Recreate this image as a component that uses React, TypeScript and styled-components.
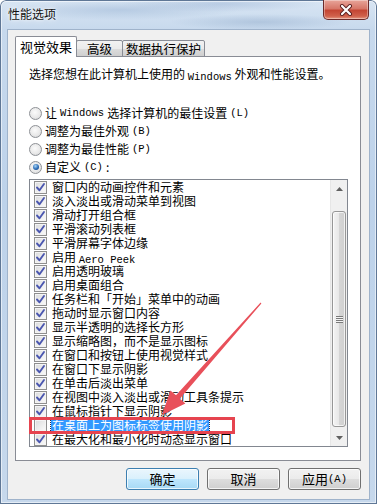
import React from "react";
import styled, { createGlobalStyle } from "styled-components";

const Global = createGlobalStyle`
  html, body { margin: 0; padding: 0; background: #ffffff; }
  body { font-family: "Noto Sans CJK SC", "Noto Sans", sans-serif; font-size: 12px; color: #000; }
  * { box-sizing: border-box; }
`;

const Frame = styled.div`
  position: relative;
  width: 377px;
  height: 504px;
  display: flex;
  flex-direction: column;
  border-radius: 6px 6px 0 0;
  background:
    radial-gradient(ellipse 120px 10px at 120px 10px, rgba(160,185,215,0.55), transparent),
    radial-gradient(ellipse 90px 8px at 260px 22px, rgba(150,175,205,0.5), transparent),
    radial-gradient(ellipse 100px 8px at 220px 4px, rgba(150,175,210,0.45), transparent),
    linear-gradient(180deg, #d8e5f3 0%, #c7d9ed 6%, #bdd2ea 40%, #c6d8ec 100%);
  box-shadow: inset 0 0 0 1px #5f7796, inset 0 0 0 2px rgba(255,255,255,0.55);
  overflow: hidden;
`;

const TitleBar = styled.div`
  height: 29px;
  display: flex;
  align-items: flex-start;
  justify-content: space-between;
  padding: 0 8px 0 8px;
`;

const Title = styled.div`
  font-size: 12px;
  line-height: 14px;
  margin-top: 7px;
  color: #111;
  text-shadow: 0 0 6px rgba(255,255,255,0.95), 0 0 3px rgba(255,255,255,0.9);
`;

const CloseBtn = styled.div`
  width: 46px;
  height: 20px;
  border: 1px solid #6b2a2a;
  border-top: none;
  border-radius: 0 0 5px 5px;
  background: linear-gradient(180deg, #e8a59a 0%, #d77769 45%, #c44634 55%, #d0614c 85%, #e69a84 100%);
  box-shadow: inset 0 0 0 1px rgba(255,255,255,0.35);
  display: flex;
  align-items: center;
  justify-content: center;
`;

const Client = styled.div`
  flex: 1;
  margin: 0 7px 4px 7px;
  background: #f0f0f0;
  border: 1px solid #9fb3cb;
  padding: 6px 8px 9px 7px;
  display: flex;
  flex-direction: column;
`;

const Tabs = styled.div`
  height: 21px;
  display: flex;
  align-items: flex-end;
  margin-bottom: -1px;
  position: relative;
  z-index: 1;
`;

const Tab = styled.div<{ $active?: boolean; $w: number }>`
  width: ${(p) => p.$w}px;
  height: ${(p) => (p.$active ? 21 : 17)}px;
  border: 1px solid #898c95;
  border-bottom: ${(p) => (p.$active ? "none" : "1px solid #898c95")};
  margin-left: ${(p) => (p.$active ? 0 : -1)}px;
  background: ${(p) => (p.$active ? "#ffffff" : "linear-gradient(180deg, #f2f2f2 0%, #ebebeb 50%, #dddddd 51%, #cfcfcf 100%)")};
  border-radius: 2px 2px 0 0;
  font-size: ${(p) => (p.$active ? 13 : 12.5)}px;
  line-height: 16px;
  padding-top: ${(p) => (p.$active ? 2 : 0)}px;
  text-align: center;
  color: #000;
`;

const Panel = styled.div`
  height: 405px;
  border: 1px solid #898c95;
  background: #ffffff;
  padding: 10px 12px 0 13px;
  display: flex;
  flex-direction: column;
`;

const Intro = styled.div`
  line-height: 14px;
  height: 14px;
  white-space: nowrap;
  margin-bottom: 23px;
`;

const Lat = styled.span`
  font-family: "Liberation Mono", monospace;
  font-size: 10.5px;
  vertical-align: -1px;
`;

const RadioRow = styled.div`
  height: 18px;
  display: flex;
  align-items: center;
  gap: 3px;
  white-space: nowrap;
  line-height: 14px;
`;

const RadioDot = styled.span<{ $on?: boolean }>`
  width: 13px;
  height: 13px;
  border-radius: 50%;
  border: 1px solid #8e9196;
  background: radial-gradient(circle at 45% 40%, #fbfbfb 0%, #e9e9e9 55%, #cfd0d2 100%);
  display: flex;
  align-items: center;
  justify-content: center;
  flex: none;
  &::after {
    content: "";
    display: ${(p) => (p.$on ? "block" : "none")};
    width: 6px;
    height: 6px;
    border-radius: 50%;
    background: radial-gradient(circle at 40% 35%, #a9d6f7 0%, #2b6cb6 55%, #0e3a78 100%);
  }
`;

const ListBox = styled.div`
  margin-top: 3px;
  width: 319px;
  height: 268px;
  border: 1px solid #828790;
  display: flex;
`;

const Items = styled.div`
  flex: 1;
  display: flex;
  flex-direction: column;
`;

const Row = styled.div`
  height: 14px;
  display: flex;
  align-items: center;
  padding-left: 4px;
  white-space: nowrap;
  line-height: 14px;
`;

const Box = styled.span`
  width: 13px;
  height: 13px;
  flex: none;
  border: 1px solid #8f8f8f;
  background: linear-gradient(135deg, #d9dadc 0%, #ececec 50%, #fbfbfb 100%);
  box-shadow: inset 0 0 0 1px #f4f4f4;
  margin-right: 5px;
  display: flex;
  align-items: center;
  justify-content: center;
`;

const Label = styled.span<{ $sel?: boolean }>`
  padding: 0 1px;
  margin-left: -1px;
  height: 14px;
  line-height: 14px;
  background: ${(p) => (p.$sel ? "#3399ff" : "transparent")};
  color: ${(p) => (p.$sel ? "#ffffff" : "#000")};
  outline: ${(p) => (p.$sel ? "1px dotted #1a2a55" : "none")};
`;

const ScrollBar = styled.div`
  width: 17px;
  display: flex;
  flex-direction: column;
  background: #f0f0f0;
  border-left: 1px solid #e6e6e6;
`;

const ArrowBtn = styled.div`
  height: 17px;
  display: flex;
  align-items: center;
  justify-content: center;
`;

const Track = styled.div`
  flex: 1;
  padding: 14px 1px 2px 1px;
  display: flex;
  flex-direction: column;
`;

const Thumb = styled.div`
  flex: 1;
  border: 1px solid #979797;
  border-radius: 3px;
  background: linear-gradient(90deg, #f4f4f4 0%, #e8e8e8 50%, #d6d6d6 51%, #cfcfcf 100%);
  box-shadow: inset 0 0 0 1px rgba(255,255,255,0.7);
  display: flex;
  align-items: center;
  justify-content: center;
`;

const Grip = styled.div`
  width: 7px;
  height: 7px;
  background: repeating-linear-gradient(180deg, #7a7a7a 0px, #7a7a7a 1px, #f4f4f4 1px, #f4f4f4 2px);
`;

const Buttons = styled.div`
  margin-top: 7px;
  display: flex;
  justify-content: flex-end;
  gap: 8px;
`;

const Button = styled.div<{ $default?: boolean }>`
  width: 73px;
  height: 22px;
  border-radius: 3px;
  border: 1px solid ${(p) => (p.$default ? "#3c7fb1" : "#707070")};
  background: ${(p) =>
    p.$default
      ? "linear-gradient(180deg, #eaf6fd 0%, #d9f0fc 50%, #bee6fd 51%, #a7d9f5 100%)"
      : "linear-gradient(180deg, #f2f2f2 0%, #ebebeb 50%, #dddddd 51%, #cfcfcf 100%)"};
  box-shadow: inset 0 0 0 1px rgba(255,255,255,0.75);
  display: flex;
  align-items: center;
  justify-content: center;
  font-size: 13px;
  line-height: 14px;
`;

const Mark = styled.div`
  position: absolute;
  left: 29px;
  top: 417px;
  width: 206px;
  height: 17px;
  border: 3px solid #e6444f;
  pointer-events: none;
`;

const Overlay = styled.svg`
  position: absolute;
  left: 0;
  top: 0;
  pointer-events: none;
`;

const Check = () => (
  <svg width="11" height="11" viewBox="0 0 11 11">
    <path d="M2 5.5 L4.5 8.3 L9 2" fill="none" stroke="#4b57b0" strokeWidth="1.9" strokeLinecap="round" strokeLinejoin="round" />
  </svg>
);

type Item = { t: React.ReactNode; on: boolean; sel?: boolean };

const items: Item[] = [
  { t: "窗口内的动画控件和元素", on: true },
  { t: "淡入淡出或滑动菜单到视图", on: true },
  { t: "滑动打开组合框", on: true },
  { t: "平滑滚动列表框", on: true },
  { t: "平滑屏幕字体边缘", on: true },
  { t: <>启用 <Lat>Aero Peek</Lat></>, on: true },
  { t: "启用透明玻璃", on: true },
  { t: "启用桌面组合", on: true },
  { t: "任务栏和「开始」菜单中的动画", on: true },
  { t: "拖动时显示窗口内容", on: true },
  { t: "显示半透明的选择长方形", on: true },
  { t: "显示缩略图，而不是显示图标", on: true },
  { t: "在窗口和按钮上使用视觉样式", on: true },
  { t: "在窗口下显示阴影", on: true },
  { t: "在单击后淡出菜单", on: true },
  { t: "在视图中淡入淡出或滑动工具条提示", on: true },
  { t: "在鼠标指针下显示阴影", on: true },
  { t: "在桌面上为图标标签使用阴影", on: false, sel: true },
  { t: "在最大化和最小化时动态显示窗口", on: true },
];

export default function App() {
  return (
    <>
      <Global />
      <Frame>
        <TitleBar>
          <Title>性能选项</Title>
          <CloseBtn>
            <svg width="14" height="12" viewBox="0 0 14 12">
              <path d="M3 2 L11 10 M11 2 L3 10" stroke="#5a2020" strokeWidth="4" strokeLinecap="round" />
              <path d="M3 2 L11 10 M11 2 L3 10" stroke="#ffffff" strokeWidth="2.2" strokeLinecap="round" />
            </svg>
          </CloseBtn>
        </TitleBar>
        <Client>
          <Tabs>
            <Tab $active $w={62}>视觉效果</Tab>
            <Tab $w={47}>高级</Tab>
            <Tab $w={83}>数据执行保护</Tab>
          </Tabs>
          <Panel>
            <Intro>选择您想在此计算机上使用的 <Lat>Windows</Lat> 外观和性能设置。</Intro>
            <RadioRow><RadioDot />让 <Lat>Windows</Lat> 选择计算机的最佳设置<Lat>(L)</Lat></RadioRow>
            <RadioRow><RadioDot />调整为最佳外观<Lat>(B)</Lat></RadioRow>
            <RadioRow><RadioDot />调整为最佳性能<Lat>(P)</Lat></RadioRow>
            <RadioRow><RadioDot $on />自定义<Lat>(C)</Lat>:</RadioRow>
            <ListBox>
              <Items>
                {items.map((it, i) => (
                  <Row key={i}>
                    <Box>{it.on ? <Check /> : null}</Box>
                    <Label $sel={it.sel}>{it.t}</Label>
                  </Row>
                ))}
              </Items>
              <ScrollBar>
                <ArrowBtn>
                  <svg width="7" height="4" viewBox="0 0 7 4"><path d="M0 4 L3.5 0 L7 4 Z" fill="#606060" /></svg>
                </ArrowBtn>
                <Track>
                  <Thumb><Grip /></Thumb>
                </Track>
                <ArrowBtn>
                  <svg width="7" height="4" viewBox="0 0 7 4"><path d="M0 0 L3.5 4 L7 0 Z" fill="#606060" /></svg>
                </ArrowBtn>
              </ScrollBar>
            </ListBox>
          </Panel>
          <Buttons>
            <Button $default>确定</Button>
            <Button>取消</Button>
            <Button>应用<Lat>(A)</Lat></Button>
          </Buttons>
        </Client>
        <Mark />
        <Overlay width="377" height="504" viewBox="0 0 377 504">
          <polygon
            points="260.6,302.6 261.4,303.4 179.8,398.7 185.4,403.6 162,415 170.4,390.4 176,395.3"
            fill="#e8505a"
          />
        </Overlay>
      </Frame>
    </>
  );
}
